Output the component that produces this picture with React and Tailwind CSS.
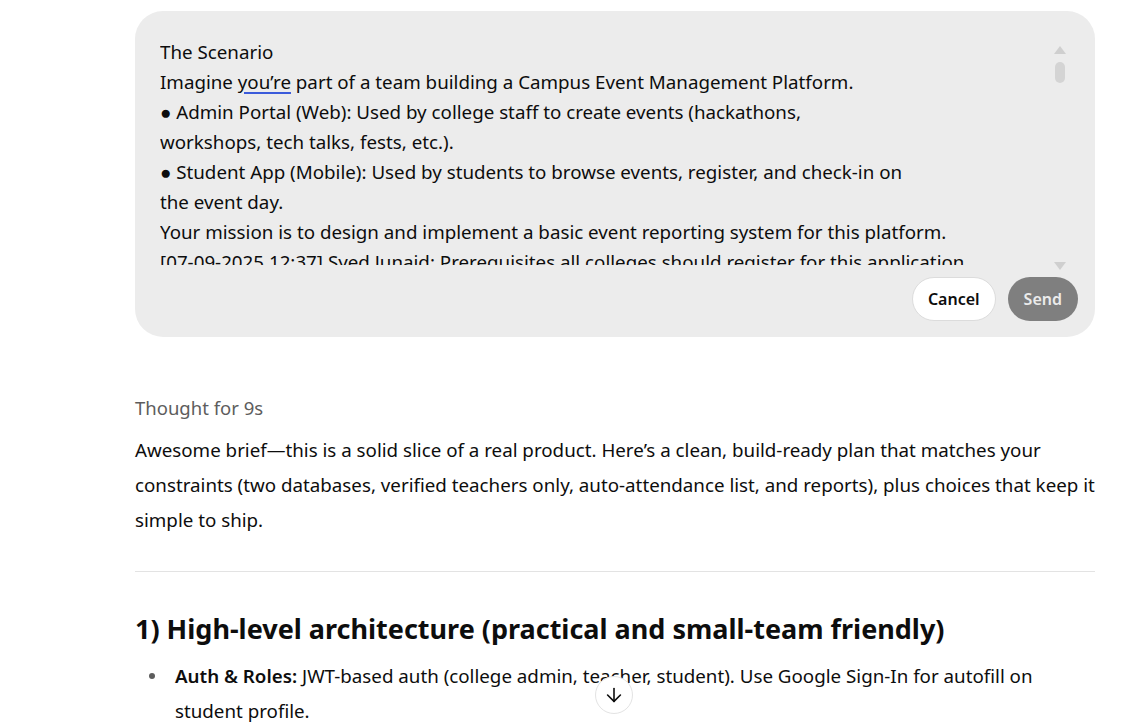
import { ArrowDown } from 'lucide-react'

const lines = [
  'The Scenario',
  null,
  '● Admin Portal (Web): Used by college staff to create events (hackathons,',
  'workshops, tech talks, fests, etc.).',
  '● Student App (Mobile): Used by students to browse events, register, and check-in on',
  'the event day.',
  'Your mission is to design and implement a basic event reporting system for this platform.',
  '[07-09-2025 12:37] Syed Junaid: Prerequisites all colleges should register for this application',
]

function Scrollbar() {
  return (
    <div className="absolute right-[29px] top-[35px] flex h-[224px] w-[12px] flex-col items-center">
      <div className="h-0 w-0 border-x-[6px] border-b-[8px] border-x-transparent border-b-[#cfcfcf]" />
      <div className="mt-[8px] h-[21px] w-[10px] rounded-full bg-[#d4d4d4]" />
      <div className="flex-1" />
      <div className="h-0 w-0 border-x-[6px] border-t-[8px] border-x-transparent border-t-[#cfcfcf]" />
    </div>
  )
}

function EditBox() {
  return (
    <div className="relative rounded-[28px] bg-[#ececec] px-[25px] pb-[16px] pt-[26px]">
      <div className="h-[228px] overflow-hidden pr-[40px] text-[18.75px] leading-[30px] text-[#0d0d0d]">
        {lines.map((line, i) =>
          line === null ? (
            <div key={i}>
              Imagine{' '}
              <span className="underline decoration-[#3b5bdb] decoration-[1.5px] underline-offset-[3px]">you’re</span>{' '}
              part of a team building a Campus Event Management Platform.
            </div>
          ) : (
            <div key={i} className="whitespace-nowrap">
              {line}
            </div>
          ),
        )}
      </div>
      <Scrollbar />
      <div className="-mr-[8px] mt-[12px] flex justify-end gap-[12px]">
        <button
          type="button"
          className="h-[44px] rounded-full border border-[#dcdcdc] bg-white px-[15px] text-[16px] font-semibold text-[#0d0d0d]"
        >
          Cancel
        </button>
        <button
          type="button"
          className="h-[44px] rounded-full bg-[#7f7f7f] px-[16px] text-[16px] font-semibold text-[#ebebeb]"
        >
          Send
        </button>
      </div>
    </div>
  )
}

export default function App() {
  return (
    <div
      className="relative min-h-[728px] overflow-hidden bg-white text-[#0d0d0d]"
      style={{ fontFamily: '"Noto Sans", "Open Sans", sans-serif' }}
    >
      <div className="ml-[135px] w-[960px] pt-[11px]">
        <EditBox />

        <p className="mt-[57px] text-[18.5px] leading-[28px] text-[#5d5d5d]">Thought for 9s</p>

        <p className="mt-[10px] text-[18.75px] leading-[35px]">
          Awesome brief—this is a solid slice of a real product. Here’s a clean, build-ready plan that matches your
          constraints (two databases, verified teachers only, auto-attendance list, and reports), plus choices that keep it
          simple to ship.
        </p>

        <hr className="mt-[34px] border-[#e3e3e3]" />

        <h2 className="mt-[37px] text-[27px] font-bold leading-[40px]">
          1) High-level architecture (practical and small-team friendly)
        </h2>

        <ul className="mt-[9px] pl-[14px]">
          <li className="flex gap-[14px] text-[18.75px] leading-[35px]">
            <span className="mt-[15px] h-[6px] w-[6px] shrink-0 rounded-full bg-[#5d5d5d]" />
            <span className="pl-[6px]">
              <b className="font-semibold">Auth &amp; Roles:</b> JWT-based auth (college admin, teacher, student). Use
              Google Sign-In for autofill on student profile.
            </span>
          </li>
        </ul>
      </div>

      <button
        type="button"
        className="absolute left-[595px] top-[676px] flex h-[38px] w-[38px] items-center justify-center rounded-full border border-[#e3e3e3] bg-white text-[#0d0d0d]"
      >
        <ArrowDown className="h-[22px] w-[22px]" strokeWidth={1.75} />
      </button>
    </div>
  )
}
